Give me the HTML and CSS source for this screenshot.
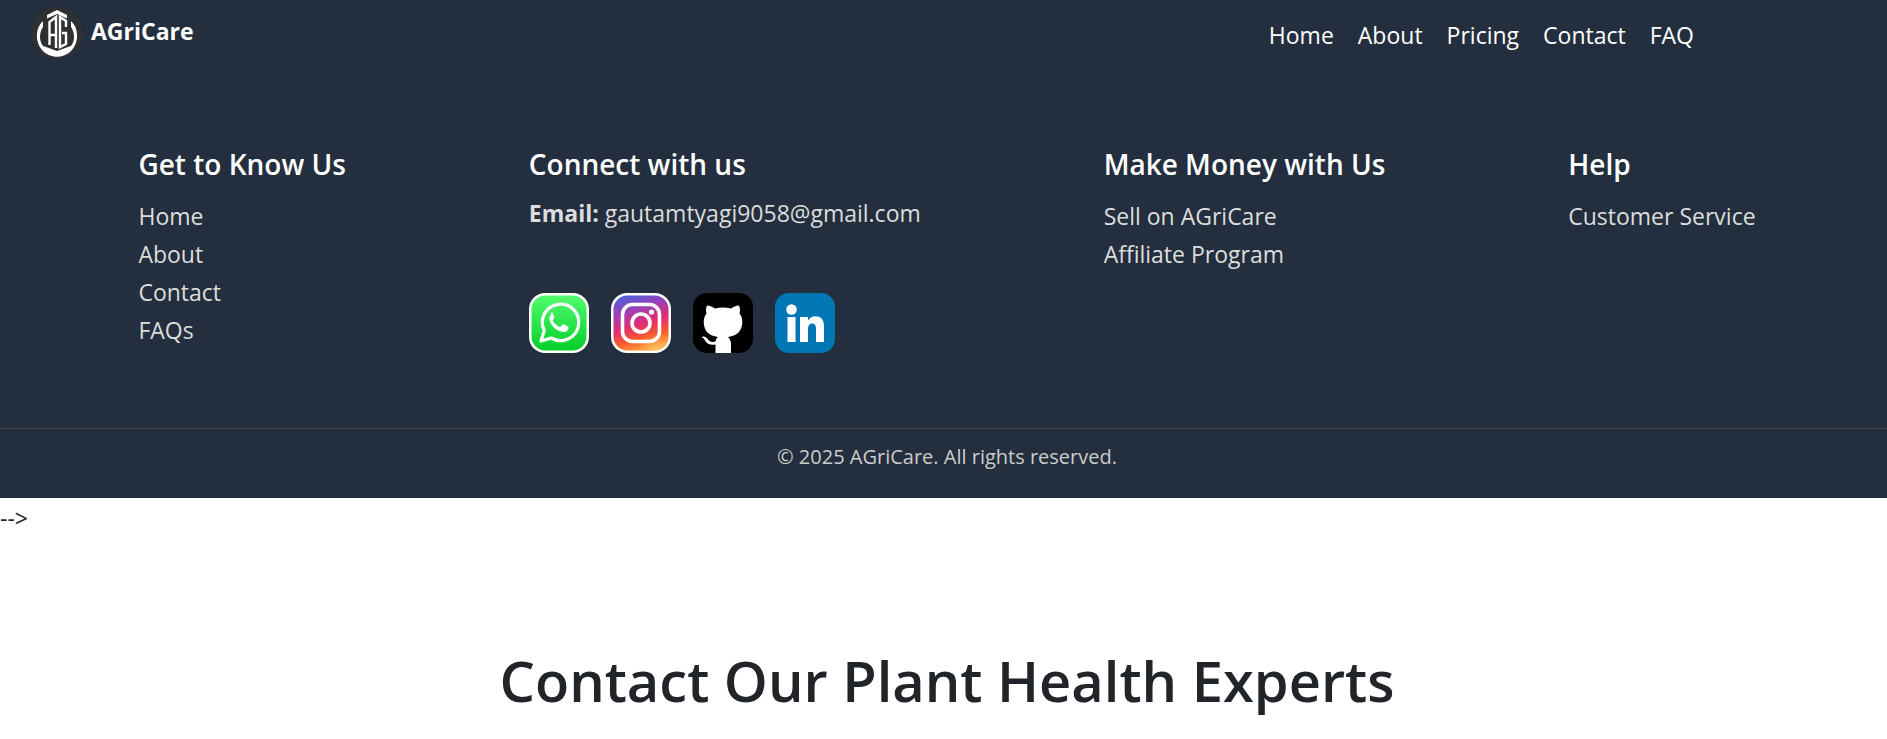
FILE: index.html
```html
<!DOCTYPE html>
<html lang="en">
<head>
<meta charset="utf-8">
<title>AGriCare - Contact</title>
<meta name="viewport" content="width=device-width, initial-scale=1">
<link rel="stylesheet" href="styles.css">
</head>
<body>
<header class="navbar">
  <a class="brand" href="#">
    <svg class="brand-logo" viewBox="0 0 52 52" aria-hidden="true">
      <circle cx="26" cy="26" r="26" fill="#2f3031"/>
      <path d="M12 14C4 21 4 35 11 43c8 9 22 9 30 0 7-8 7-22-1-29v6c4 6 4 14 0 19l-3 1-11 4-11-4-3-1c-4-5-4-13 0-19z" fill="#fff"/>
      <path d="M16 8l10-5 10 5v3.500l-10-4.500-10 4.500z" fill="#fff"/>
      <path d="M18.500 38V15l6.500-5v31M18.500 28H25" fill="none" stroke="#fff" stroke-width="2.400"/>
      <path d="M35 20v-6l-6-4v30l6-3V26h-4" fill="none" stroke="#fff" stroke-width="2.400"/>
    </svg>
    <span>AGriCare</span>
  </a>
  <nav class="nav-links" aria-label="Main">
    <a href="#">Home</a>
    <a href="#">About</a>
    <a href="#">Pricing</a>
    <a href="#">Contact</a>
    <a href="#">FAQ</a>
  </nav>
</header>
<footer class="footer">
  <div class="footer-columns">
    <section>
      <h2>Get to Know Us</h2>
      <ul>
        <li><a href="#">Home</a></li>
        <li><a href="#">About</a></li>
        <li><a href="#">Contact</a></li>
        <li><a href="#">FAQs</a></li>
      </ul>
    </section>
    <section>
      <h2>Connect with us</h2>
      <p class="email"><strong>Email:</strong> gautamtyagi9058@gmail.com</p>
      <div class="social">
        <a href="#" aria-label="WhatsApp">
          <svg viewBox="0 0 60 60">
            <defs><linearGradient id="wa" x1="0" y1="0" x2="0" y2="1"><stop offset="0" stop-color="#52fb6c"/><stop offset="1" stop-color="#04cf2b"/></linearGradient></defs>
            <rect width="60" height="60" rx="16" fill="#fff"/>
            <rect x="2.500" y="2.500" width="55" height="55" rx="14" fill="url(#wa)"/>
            <path d="M12 48l3.300-10.500a18.200 18.200 0 1 1 7 7.500z" fill="none" stroke="#fff" stroke-width="3.200" stroke-linejoin="round"/>
            <path d="M23 21c-2 1-3 3-2.500 6 1.500 6 7 11.500 14 12 3 0 5-2 5-4.500 0-.6-.3-.9-.8-1.200l-4-2c-.6-.3-1 0-1.400.4l-1.500 1.900c-.4.500-.9.500-1.500.2-3-1.400-5-3.300-6.500-6-.3-.6-.2-1 .2-1.400l1.100-1.400c.4-.5.4-.8.200-1.400l-1.700-3.600c-.4-.7-1.600-.6-2.600 0z" fill="#fff"/>
          </svg>
        </a>
        <a href="#" aria-label="Instagram">
          <svg viewBox="0 0 60 60">
            <defs>
              <linearGradient id="ig" x1="0.200" y1="0" x2="0.500" y2="1"><stop offset="0" stop-color="#4c61d8"/><stop offset=".28" stop-color="#9b3fb8"/><stop offset=".55" stop-color="#e12d73"/><stop offset=".8" stop-color="#f95b2c"/><stop offset="1" stop-color="#fda03d"/></linearGradient>
              <radialGradient id="igy" cx=".8" cy="1.050" r=".4"><stop offset="0" stop-color="#ffe07a"/><stop offset="1" stop-color="#ff8a30" stop-opacity="0"/></radialGradient>
            </defs>
            <rect width="60" height="60" rx="16" fill="#fff"/>
            <rect x="2.500" y="2.500" width="55" height="55" rx="14" fill="url(#ig)"/>
            <rect x="2.500" y="2.500" width="55" height="55" rx="14" fill="url(#igy)"/>
            <rect x="11.500" y="11.500" width="37" height="37" rx="10" fill="none" stroke="#fff" stroke-width="3.600"/>
            <circle cx="30" cy="30" r="9" fill="none" stroke="#fff" stroke-width="3.600"/>
            <circle cx="40.500" cy="19" r="2.600" fill="#fff"/>
          </svg>
        </a>
        <a href="#" aria-label="GitHub">
          <svg viewBox="0 0 60 60">
            <rect width="60" height="60" rx="14" fill="#000"/>
            <path d="M14 12.500c3 0 6 1.700 8 3 5-1.300 11-1.300 16 0 2-1.300 5-3 8-3 1.300 3 1.200 6 .5 8 2.500 3 3 6 2.700 10-.7 8-5.200 12-14.200 13.500 2 2 3 4 3 7v9H22.500v-8.500c-5 1-8.500-.5-10.500-4-1-2-2-2.800-3.800-3.500 3-1.500 5.300.2 6.800 2.500s4 3 7.500 2c.2-2 1-3.500 2.500-4.500-9-1.500-13.500-5.500-14.200-13.500-.3-4 .4-7 2.700-10-.7-2-.8-5 .5-8z" fill="#fff"/>
          </svg>
        </a>
        <a href="#" aria-label="LinkedIn">
          <svg viewBox="0 0 60 60">
            <rect width="60" height="60" rx="14" fill="#0077b5"/>
            <circle cx="16.500" cy="16.500" r="5.300" fill="#fff"/>
            <path d="M12.500 24h8v25h-8zM25 24h8v3.500c1.700-2.700 4.300-4.200 7.500-4.200 6 0 8.500 4 8.500 10.200V49h-8V35.500c0-3-1-5-3.700-5-2.900 0-4.300 2-4.300 5V49h-8z" fill="#fff"/>
          </svg>
        </a>
      </div>
    </section>
    <section>
      <h2>Make Money with Us</h2>
      <ul>
        <li><a href="#">Sell on AGriCare</a></li>
        <li><a href="#">Affiliate Program</a></li>
      </ul>
    </section>
    <section>
      <h2>Help</h2>
      <ul>
        <li><a href="#">Customer Service</a></li>
      </ul>
    </section>
  </div>
  <p class="copyright">© 2025 AGriCare. All rights reserved.</p>
</footer>
<main>
  <p class="arrow">--&gt;</p>
  <h1>Contact Our Plant Health Experts</h1>
</main>
</body>
</html>
```

FILE: styles.css
```css
* {
  box-sizing: border-box;
}

body {
  margin: 0;
  background: #fff;
  color: #212529;
  font-family: "Open Sans", "Noto Sans", sans-serif;
  font-size: 23px;
  line-height: 36px;
}

h1,
h2,
p,
ul {
  margin: 0;
  padding: 0;
}

a {
  color: inherit;
  text-decoration: none;
}

.navbar {
  display: flex;
  align-items: flex-start;
  justify-content: space-between;
  padding: 7px 193px 0 31px;
  background: #232f3e;
  color: #fff;
}

.brand {
  display: flex;
  gap: 8px;
  font-weight: 700;
  line-height: 48px;
}

.brand-logo {
  width: 52px;
  height: 52px;
}

.nav-links {
  display: flex;
  gap: 24px;
  padding-top: 10px;
}

.footer {
  background: #232f3e;
  color: #ddd;
}

.footer-columns {
  display: flex;
  justify-content: space-around;
  padding: 85px 40px 75px 47px;
}

.footer h2 {
  margin-bottom: 13px;
  color: #fff;
  font-size: 28px;
  font-weight: 600;
  line-height: 40px;
}

.footer ul {
  list-style: none;
  line-height: 38px;
}

.email {
  line-height: 32px;
}

.social {
  display: flex;
  gap: 22px;
  margin-top: 64px;
}

.social svg {
  display: block;
  width: 60px;
  height: 60px;
}

.copyright {
  padding: 10px 16px 23px 23px;
  border-top: 1px solid #444;
  color: #ccc;
  font-size: 20px;
  text-align: center;
}

.arrow {
  padding-top: 2px;
}

h1 {
  padding: 108px 16px 0 23px;
  font-size: 56px;
  font-weight: 600;
  line-height: 72px;
  text-align: center;
}
```
